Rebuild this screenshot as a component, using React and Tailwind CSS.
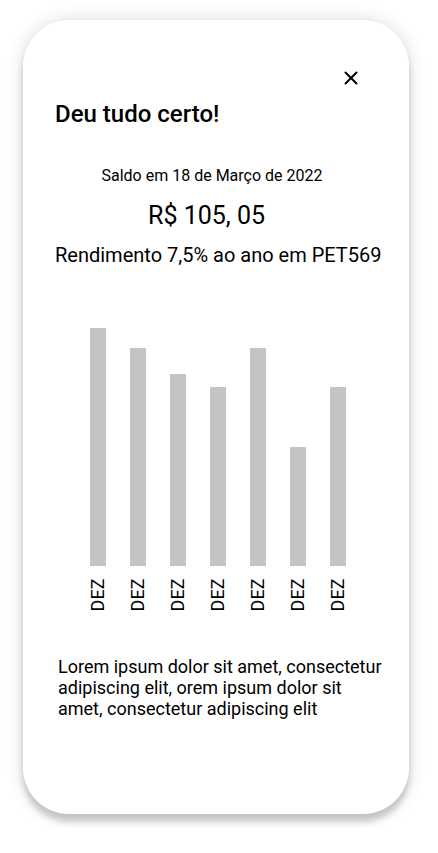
import { X } from 'lucide-react'

const barras = [238, 218, 192, 179, 218, 119, 179]

export default function App() {
  return (
    <div className="min-h-[853px] w-[438px] bg-white pt-5 pl-[23px] font-['Roboto',sans-serif] text-black">
      <div className="relative w-[386px] h-[794px] bg-white rounded-[46px] shadow-[0_8px_6px_rgba(0,0,0,0.18),0_0_18px_rgba(0,0,0,0.14)]">
        <button className="absolute top-[47px] left-[317px] text-black">
          <X size={22} strokeWidth={2.2} />
        </button>

        <h1 className="pt-[82px] pl-8 text-[24px] font-medium leading-6">Deu tudo certo!</h1>

        <p className="mt-[40px] text-center text-[16px] leading-5 pr-[8px]">Saldo em 18 de Março de 2022</p>
        <p className="mt-[18px] pl-[125px] text-[25px] leading-6">R$ 105, 05</p>
        <p className="mt-[15px] pl-8 text-[20px] leading-6">Rendimento 7,5% ao ano em PET569</p>

        <div className="mt-[61px] pl-[67px] flex gap-6 items-end h-[238px]">
          {barras.map((h, i) => (
            <div key={i} className="w-4 bg-[#C4C4C4]" style={{ height: h }} />
          ))}
        </div>
        <div className="mt-[12px] pl-[67px] flex gap-6">
          {barras.map((_, i) => (
            <div key={i} className="w-4 h-[34px] flex items-center justify-center">
              <span className="-rotate-90 text-[18px] leading-4 whitespace-nowrap">DEZ</span>
            </div>
          ))}
        </div>

        <p className="mt-[44px] pl-[35px] pr-6 text-[18px] leading-[21px]">
          Lorem ipsum dolor sit amet, consectetur adipiscing elit, orem ipsum dolor sit amet, consectetur adipiscing elit
        </p>
      </div>
    </div>
  )
}
